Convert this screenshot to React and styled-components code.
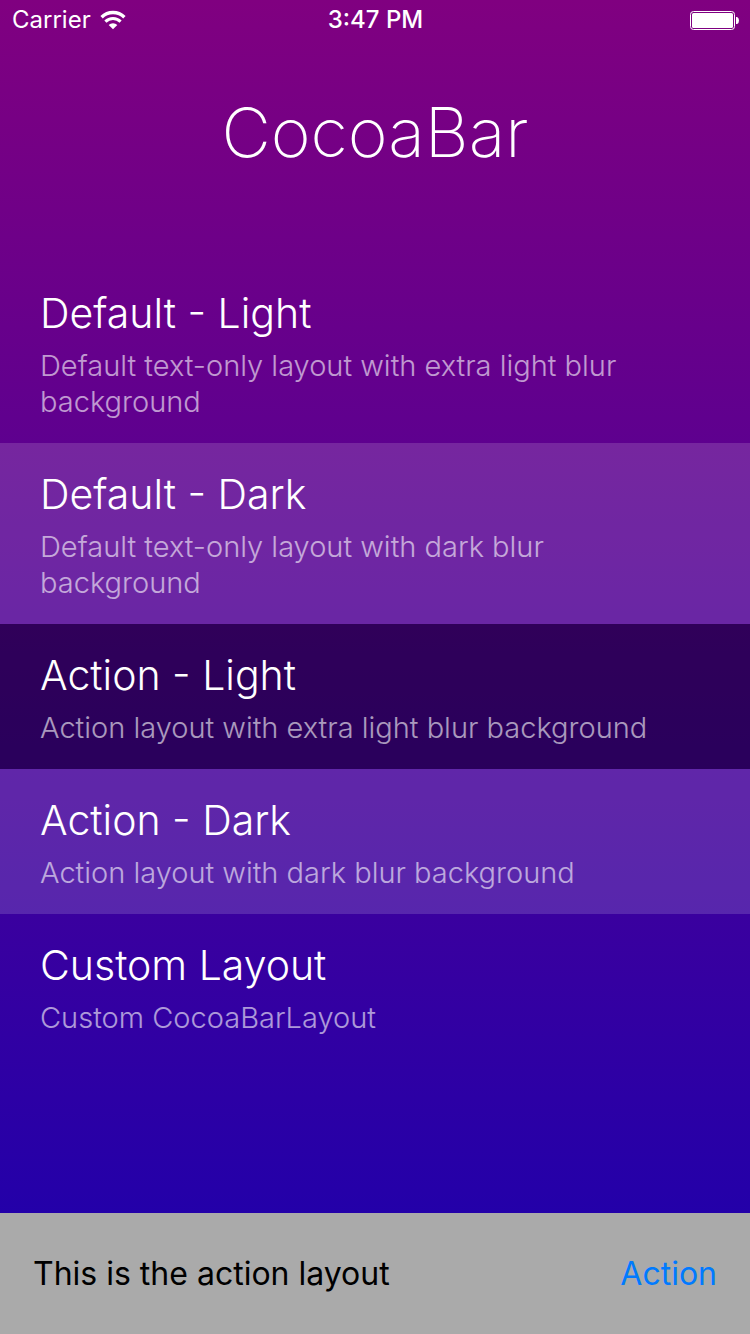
import React from "react";
import styled, { createGlobalStyle } from "styled-components";

const GlobalStyle = createGlobalStyle`
  * { box-sizing: border-box; }
  body {
    margin: 0;
    font-family: Inter, "Open Sans", sans-serif;
    color: #fff;
  }
`;

const Screen = styled.div`
  display: flex;
  flex-direction: column;
  min-height: 100vh;
  background: linear-gradient(#800080, #1a00ad);
`;

const StatusBar = styled.header`
  display: grid;
  grid-template-columns: 1fr auto 1fr;
  align-items: center;
  height: 40px;
  padding: 0 11px 0 12px;
  font-size: 24px;
  line-height: 28px;
`;

const Carrier = styled.div`
  display: flex;
  align-items: center;
  gap: 9px;
`;

const Clock = styled.time`
  font-weight: 500;
`;

const BatterySlot = styled.div`
  display: flex;
  justify-content: flex-end;
`;

const Title = styled.h1`
  margin: 0;
  padding: 46px 20px 84px;
  text-align: center;
  font-size: 68px;
  line-height: 92px;
  font-weight: 200;
`;

const StyleList = styled.main`
  display: flex;
  flex-direction: column;
  flex: 1;
`;

const tints = {
  none: "transparent",
  light: "rgba(255, 255, 255, 0.15)",
  pressed: "rgba(0, 0, 0, 0.4)",
};

const StyleRow = styled.button`
  display: flex;
  flex-direction: column;
  gap: 8px;
  width: 100%;
  padding: 24px 40px 23px;
  border: 0;
  background: ${(p) => tints[p.$tint]};
  color: #fff;
  font-family: inherit;
  text-align: left;
  cursor: pointer;
`;

const RowTitle = styled.span`
  font-size: 41px;
  line-height: 54px;
  font-weight: 300;
`;

const RowDetail = styled.span`
  font-size: 29px;
  line-height: 36px;
  font-weight: 300;
  opacity: 0.6;
`;

const CocoaBar = styled.footer`
  display: flex;
  align-items: center;
  justify-content: space-between;
  min-height: 121px;
  padding: 0 33px;
  background: #aaa;
  color: #000;
  font-size: 32px;
  line-height: 40px;
`;

const BarAction = styled.button`
  padding: 0;
  border: 0;
  background: none;
  color: #007aff;
  font: inherit;
  cursor: pointer;
`;

const rows = [
  { title: "Default - Light", detail: "Default text-only layout with extra light blur background", tint: "none" },
  { title: "Default - Dark", detail: "Default text-only layout with dark blur background", tint: "light" },
  { title: "Action - Light", detail: "Action layout with extra light blur background", tint: "pressed" },
  { title: "Action - Dark", detail: "Action layout with dark blur background", tint: "light" },
  { title: "Custom Layout", detail: "Custom CocoaBarLayout", tint: "none" },
];

function WifiIcon() {
  return (
    <svg width="26" height="20" viewBox="0 0 26 20" fill="none" stroke="#fff" aria-hidden="true">
      <path d="M1.6 7.2a16.2 16.2 0 0 1 22.8 0" strokeWidth="3.4" />
      <path d="M5.4 11.6a10.7 10.7 0 0 1 15.2 0" strokeWidth="3" />
      <path d="M13 19.2 8.7 14.9a6.1 6.1 0 0 1 8.6 0z" fill="#fff" stroke="none" />
    </svg>
  );
}

function BatteryIcon() {
  return (
    <svg width="49" height="20" viewBox="0 0 49 20" role="img" aria-label="Battery full">
      <rect x="0.5" y="1.5" width="44" height="18" rx="3" fill="none" stroke="#fff" />
      <rect x="2" y="3" width="41" height="15" rx="1.5" fill="#fff" />
      <path d="M46 7h1.2q1.8 1 1.8 3.5T47.2 14H46z" fill="#fff" />
    </svg>
  );
}

export default function App() {
  return (
    <Screen>
      <GlobalStyle />
      <StatusBar>
        <Carrier>
          Carrier
          <WifiIcon />
        </Carrier>
        <Clock>3:47 PM</Clock>
        <BatterySlot>
          <BatteryIcon />
        </BatterySlot>
      </StatusBar>
      <Title>CocoaBar</Title>
      <StyleList>
        {rows.map((row) => (
          <StyleRow key={row.title} type="button" $tint={row.tint}>
            <RowTitle>{row.title}</RowTitle>
            <RowDetail>{row.detail}</RowDetail>
          </StyleRow>
        ))}
      </StyleList>
      <CocoaBar>
        <span>This is the action layout</span>
        <BarAction type="button">Action</BarAction>
      </CocoaBar>
    </Screen>
  );
}
